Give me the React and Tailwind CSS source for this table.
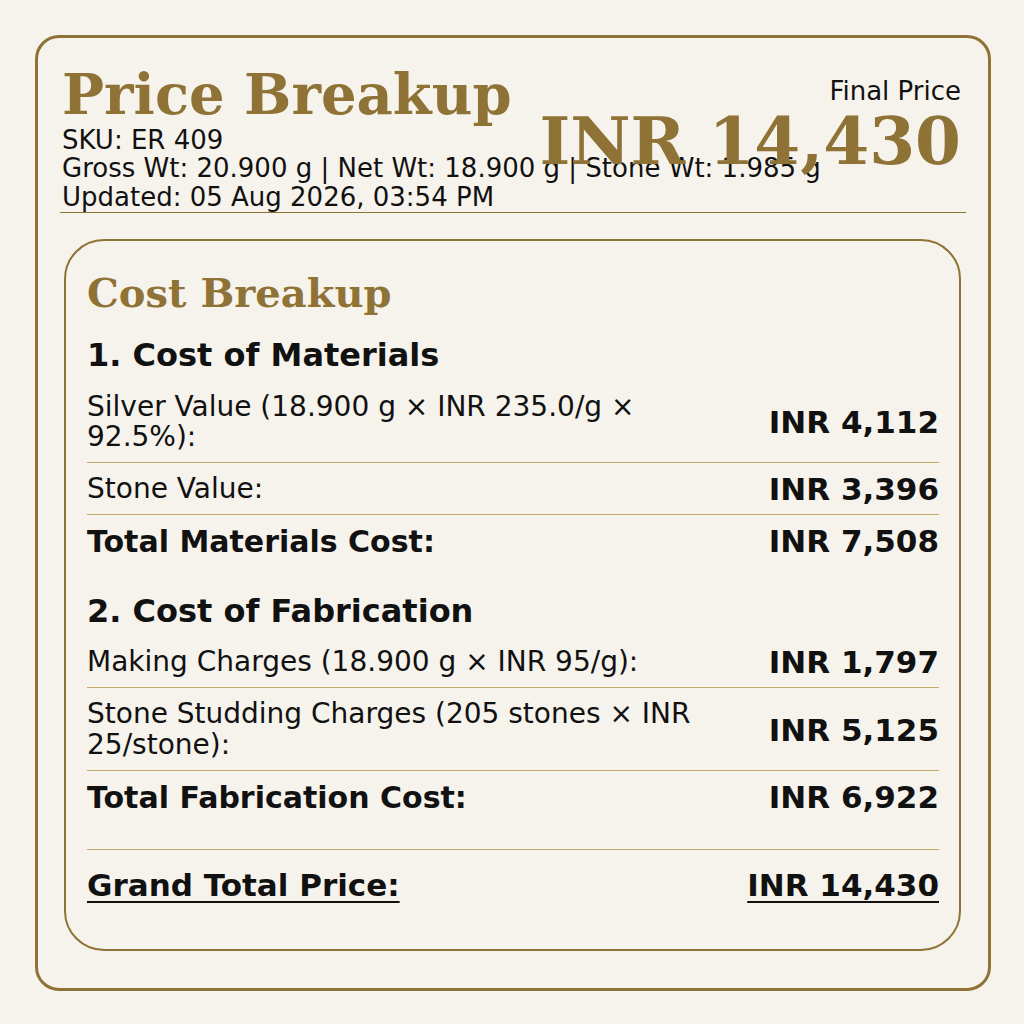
import React from "react";

const serif = { fontFamily: '"DejaVu Serif", "Liberation Serif", serif' };

const Row = ({ label, value, total, divider = true }) => (
  <div
    className={`flex items-center justify-between gap-6 ${
      divider ? "border-b border-[#c4a96c] pb-[9px] pt-[11px]" : "py-[10px]"
    }`}
  >
    <div
      className={`max-w-[620px] leading-[1.1] ${
        total ? "text-[30px] font-bold" : "text-[28px]"
      }`}
    >
      {label}
    </div>
    <div className="shrink-0 text-[31px] font-bold leading-none">{value}</div>
  </div>
);

const App = () => {
  return (
    <div
      className="h-[1024px] w-[1024px] bg-[#f6f3ec] pl-[35px] pt-[35px] text-[#111]"
      style={{ fontFamily: '"DejaVu Sans", "Liberation Sans", sans-serif' }}
    >
      <div className="flex h-[956px] w-[956px] flex-col rounded-[24px] border-[3px] border-[#8f7235] px-[22px] pt-[26px]">
        <div className="relative border-b border-[#8f7235] px-[2px] pb-[1px]">
          <h1
            className="text-[56px] font-bold leading-[1.1] text-[#8f7235]"
            style={serif}
          >
            Price Breakup
          </h1>
          <div className="whitespace-nowrap text-[26px] leading-[1.1]">
            <div>SKU: ER 409</div>
            <div>
              Gross Wt: 20.900 g | Net Wt: 18.900 g | Stone Wt: 1.985 g
            </div>
            <div>Updated: 05 Aug 2026, 03:54 PM</div>
          </div>
          <div className="absolute right-[5px] top-[13px] text-right">
            <div className="text-[26px] leading-[1.1]">Final Price</div>
            <div
              className="mt-[2px] text-[66px] font-bold leading-none text-[#8f7235]"
              style={serif}
            >
              INR 14,430
            </div>
          </div>
        </div>

        <div className="ml-[4px] mr-[5px] mt-[26px] rounded-[40px] border-2 border-[#8f7235] pb-[47px] pl-[21px] pr-[20px] pt-[30px]">
          <h2
            className="text-[40px] font-bold leading-[1.1] text-[#8f7235]"
            style={serif}
          >
            Cost Breakup
          </h2>

          <h3 className="mt-[23px] text-[32px] font-bold leading-[1.1]">
            1. Cost of Materials
          </h3>
          <div className="mt-[7px]">
            <Row
              label="Silver Value (18.900 g × INR 235.0/g × 92.5%):"
              value="INR 4,112"
            />
            <Row label="Stone Value:" value="INR 3,396" />
            <Row
              label="Total Materials Cost:"
              value="INR 7,508"
              total
              divider={false}
            />
          </div>

          <h3 className="mt-[26px] text-[32px] font-bold leading-[1.1]">
            2. Cost of Fabrication
          </h3>
          <div className="mt-[7px]">
            <Row
              label="Making Charges (18.900 g × INR 95/g):"
              value="INR 1,797"
            />
            <Row
              label="Stone Studding Charges (205 stones × INR 25/stone):"
              value="INR 5,125"
            />
            <Row
              label="Total Fabrication Cost:"
              value="INR 6,922"
              total
              divider={false}
            />
          </div>

          <div className="mt-[25px] flex items-center justify-between border-t border-[#c4a96c] pt-[18px] text-[31px] font-bold leading-[1.1]">
            <span className="underline decoration-2 underline-offset-[5px]">
              Grand Total Price:
            </span>
            <span className="underline decoration-2 underline-offset-[5px]">
              INR 14,430
            </span>
          </div>
        </div>
      </div>
    </div>
  );
};

export default App;
